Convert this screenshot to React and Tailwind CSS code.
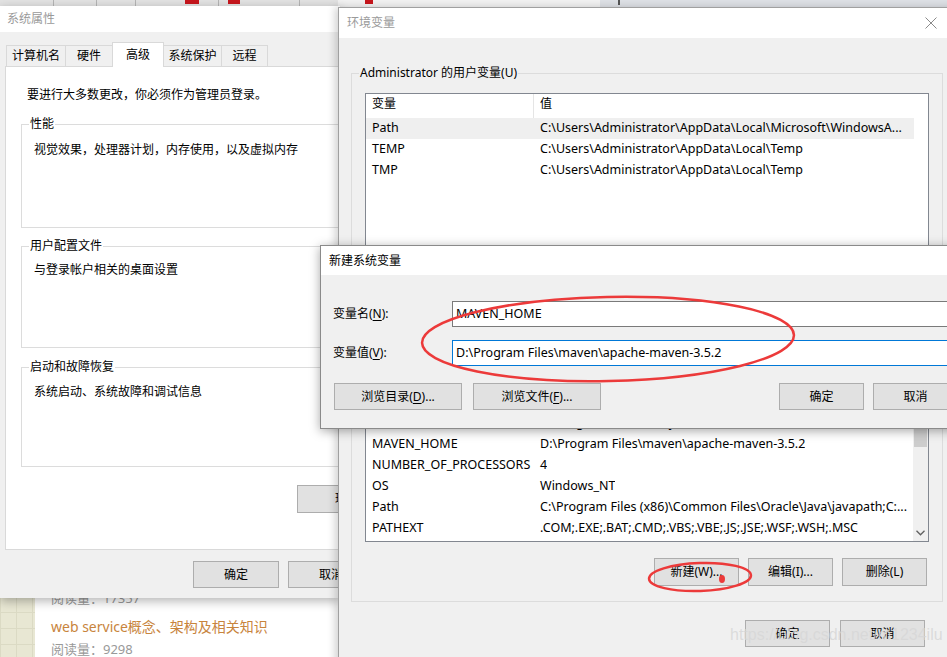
import React from "react";

const Btn = ({ className = "", children }) => (
  <div
    className={
      "flex shrink-0 items-center justify-center border border-[#adadad] bg-[#e1e1e1] text-[12px] leading-none text-black " +
      className
    }
  >
    {children}
  </div>
);

const U = ({ children }) => <span className="underline underline-offset-2">{children}</span>;

const Row = ({ name, value, sel }) => (
  <div className={"flex h-[21px] shrink-0 items-center text-[12.5px] " + (sel ? "bg-[#efefef]" : "")}>
    <div className="w-[168px] shrink-0 truncate pl-[6px]">{name}</div>
    <div className="truncate pl-[6px]">{value}</div>
  </div>
);

const Header = () => (
  <div className="flex h-[24px] shrink-0 text-[12px]">
    <div className="w-[168px] shrink-0 border-r border-[#e5e5e5] pl-[6px] pt-[2px] leading-[16px]">变量</div>
    <div className="pl-[6px] pt-[2px] leading-[16px]">值</div>
  </div>
);

export default function App() {
  const tab = "flex h-[21px] items-center justify-center border border-b-0 border-[#d9d9d9] bg-[#f0f0f0] text-[12px] -ml-px";
  return (
    <div className="relative h-[657px] w-[947px] overflow-hidden bg-[#e6e6e6] font-['Noto_Sans','Noto_Sans_CJK_SC',sans-serif] text-black">
      {/* browser tab strip */}
      <div className="absolute left-0 top-0 flex h-[8px] w-full bg-[#dee1e6]">
        <div className="flex h-full w-[338px] bg-[#e3e3e3]">
          <div className="h-full w-[54px] border-r border-[#b5b5b5]" />
          <div className="h-full w-[43px] border-r border-[#b5b5b5]" />
          <div className="h-full w-[39px] border-r border-[#b5b5b5]" />
          <div className="flex h-full w-[83px] items-start border-r border-[#b5b5b5] pl-[49px]">
            <div className="h-[4px] w-[14px] bg-[#c8161d]" />
          </div>
          <div className="flex h-full w-[81px] items-start border-r border-[#b5b5b5] pl-[9px]">
            <div className="h-[4px] w-[12px] bg-[#c8161d]" />
          </div>
        </div>
        <div className="relative flex h-full w-[262px] bg-[#f2f2f2] pl-[27px]">
          <div className="h-[4px] w-[8px] bg-[#c8161d]" />
        </div>
        <div className="ml-[18px] h-[5px] w-[2px] bg-[#555]" />
      </div>

      {/* blog page behind */}
      <div className="absolute left-0 top-[580px] flex h-[77px] w-[340px]">
        <div className="w-[35px] bg-[#e8e7d3] bg-[linear-gradient(#dbdac4_1px,transparent_1px),linear-gradient(90deg,#dbdac4_1px,transparent_1px)] bg-size-[16px_16px]" />
        <div className="flex flex-1 flex-col bg-white pl-[16px] pt-[10px]">
          <div className="text-[13px] leading-[16px] text-[#999]">阅读量：17357</div>
          <div className="mt-[12px] text-[14px] leading-[18px] text-[#c8843d]">web service概念、架构及相关知识</div>
          <div className="mt-[5px] text-[13px] leading-[16px] text-[#999]">阅读量：9298</div>
        </div>
      </div>

      {/* 系统属性 window */}
      <div className="absolute left-0 top-[6px] flex h-[592px] w-[340px] flex-col bg-[#f0f0f0] shadow-[0_3px_10px_rgba(0,0,0,0.3)]">
        <div className="flex h-[26px] shrink-0 items-center bg-white pl-[7px] text-[12px] text-[#9a9a9a]">系统属性</div>
        <div className="relative z-10 flex h-[34px] shrink-0 items-end pl-[6px]">
          <div className={tab + " ml-0 w-[60px]"}>计算机名</div>
          <div className={tab + " w-[48px]"}>硬件</div>
          <div className="-mb-px -ml-px flex h-[25px] w-[52px] items-start justify-center border border-b-0 border-[#d9d9d9] bg-white pt-[3px] text-[12px]">
            高级
          </div>
          <div className={tab + " w-[59px]"}>系统保护</div>
          <div className={tab + " w-[47px]"}>远程</div>
        </div>
        <div className="ml-[5px] flex h-[484px] w-[340px] shrink-0 flex-col border border-[#d9d9d9] bg-white text-[12px]">
          <div className="pl-[21px] pt-[20px] leading-[16px]">要进行大多数更改，你必须作为管理员登录。</div>
          <div className="ml-[15px] mt-[21px] flex h-[104px] w-[330px] shrink-0 flex-col border border-[#dcdcdc]">
            <div className="-mt-[9px] ml-[7px] w-fit bg-white px-px leading-[16px]">性能</div>
            <div className="ml-[12px] mt-[10px] leading-[16px]">视觉效果，处理器计划，内存使用，以及虚拟内存</div>
          </div>
          <div className="ml-[15px] mt-[18px] flex h-[102px] w-[330px] shrink-0 flex-col border border-[#dcdcdc]">
            <div className="-mt-[9px] ml-[7px] w-fit bg-white px-px leading-[16px]">用户配置文件</div>
            <div className="ml-[12px] mt-[8px] leading-[16px]">与登录帐户相关的桌面设置</div>
          </div>
          <div className="ml-[15px] mt-[19px] flex h-[100px] w-[330px] shrink-0 flex-col border border-[#dcdcdc]">
            <div className="-mt-[9px] ml-[7px] w-fit bg-white px-px leading-[16px]">启动和故障恢复</div>
            <div className="ml-[12px] mt-[9px] leading-[16px]">系统启动、系统故障和调试信息</div>
          </div>
          <Btn className="ml-[291px] mt-[18px] h-[28px] w-[150px]">
            环境变量(<U>N</U>)...
          </Btn>
        </div>
        <div className="ml-[193px] mt-[11px] flex gap-[9px]">
          <Btn className="h-[27px] w-[86px]">确定</Btn>
          <Btn className="h-[27px] w-[86px]">取消</Btn>
        </div>
      </div>

      {/* 环境变量 window */}
      <div className="absolute left-[338px] top-[7px] flex h-[660px] w-[620px] flex-col border-l border-t border-[#a0a0a0] bg-[#f0f0f0] shadow-[-3px_0_8px_rgba(0,0,0,0.18)]">
        <div className="flex h-[30px] shrink-0 items-center justify-between bg-white pl-[8px] pr-[21px] text-[12px] text-[#9a9a9a]">
          <span>环境变量</span>
          <svg width="12" height="12" viewBox="0 0 12 12">
            <path d="M0.5 0.5 L11.5 11.5 M11.5 0.5 L0.5 11.5" stroke="#8a8a8a" strokeWidth="1" />
          </svg>
        </div>

        <div className="ml-[12px] mt-[35px] flex h-[218px] w-[592px] shrink-0 flex-col border border-[#dcdcdc] text-[12px]">
          <div className="-mt-[9px] ml-[7px] w-fit bg-[#f0f0f0] px-px leading-[16px]">Administrator 的用户变量(U)</div>
          <div className="ml-[13px] mt-[12px] flex h-[180px] w-[564px] shrink-0 overflow-hidden border border-[#828790] bg-white">
            <div className="flex w-[548px] shrink-0 flex-col">
              <Header />
              <Row name="Path" value="C:\Users\Administrator\AppData\Local\Microsoft\WindowsA..." sel />
              <Row name="TEMP" value="C:\Users\Administrator\AppData\Local\Temp" />
              <Row name="TMP" value="C:\Users\Administrator\AppData\Local\Temp" />
            </div>
          </div>
        </div>

        <div className="ml-[12px] mt-[14px] flex h-[297px] w-[592px] shrink-0 flex-col border border-[#dcdcdc] text-[12px]">
          <div className="-mt-[9px] ml-[7px] w-fit bg-[#f0f0f0] px-px leading-[16px]">系统变量(S)</div>
          <div className="ml-[13px] mt-[12px] flex h-[217px] w-[564px] shrink-0 overflow-hidden border border-[#828790] bg-white">
            <div className="flex w-[547px] shrink-0 flex-col overflow-hidden">
              <Header />
              <Row name="CLASSPATH" value=".;%JAVA_HOME%\lib;%JAVA_HOME%\lib\tools.jar" />
              <Row name="ComSpec" value="C:\Windows\system32\cmd.exe" />
              <Row name="DriverData" value="C:\Windows\System32\Drivers\DriverData" />
              <Row name="JAVA_HOME" value="C:\Program Files\Java\jdk1.8.0_151" />
              <Row name="MAVEN_HOME" value="D:\Program Files\maven\apache-maven-3.5.2" />
              <Row name="NUMBER_OF_PROCESSORS" value="4" />
              <Row name="OS" value="Windows_NT" />
              <Row name="Path" value="C:\Program Files (x86)\Common Files\Oracle\Java\javapath;C:..." />
              <Row name="PATHEXT" value=".COM;.EXE;.BAT;.CMD;.VBS;.VBE;.JS;.JSE;.WSF;.WSH;.MSC" />
            </div>
            <div className="flex w-[15px] shrink-0 flex-col bg-[#f0f0f0]">
              <div className="ml-[1px] mt-[76px] h-[45px] w-[13px] bg-[#cdcdcd]" />
              <div className="mt-auto flex h-[16px] items-center justify-center">
                <svg width="9" height="6" viewBox="0 0 9 6">
                  <path d="M0.5 0.8 L4.5 4.8 L8.5 0.8" fill="none" stroke="#606060" strokeWidth="1.3" />
                </svg>
              </div>
            </div>
          </div>
          <div className="ml-[302px] mt-[16px] flex gap-[9px]">
            <Btn className="h-[28px] w-[85px]">新建(W)...</Btn>
            <Btn className="h-[28px] w-[85px]">编辑(I)...</Btn>
            <Btn className="h-[28px] w-[85px]">删除(L)</Btn>
          </div>
        </div>

        <div className="ml-[406px] mt-[18px] flex gap-[10px]">
          <Btn className="h-[27px] w-[85px]">确定</Btn>
          <Btn className="h-[27px] w-[85px]">取消</Btn>
        </div>
      </div>

      {/* 新建系统变量 dialog */}
      <div className="absolute left-[320px] top-[245px] flex h-[184px] w-[640px] flex-col border border-[#8a8a8a] bg-[#f0f0f0] text-[12px] shadow-[0_2px_10px_rgba(0,0,0,0.35)]">
        <div className="flex h-[29px] shrink-0 items-center bg-white pl-[8px]">新建系统变量</div>
        <div className="mt-[26px] flex items-center">
          <div className="w-[131px] shrink-0 pl-[12px]">
            变量名(<U>N</U>):
          </div>
          <div className="flex h-[26px] w-[520px] items-center border border-[#7a7a7a] bg-white pl-[3px] text-[12.5px]">MAVEN_HOME</div>
        </div>
        <div className="mt-[13px] flex items-center">
          <div className="w-[131px] shrink-0 pl-[12px]">
            变量值(<U>V</U>):
          </div>
          <div className="flex h-[26px] w-[520px] items-center border border-[#0078d7] bg-white pl-[3px] text-[12.5px]">
            D:\Program Files\maven\apache-maven-3.5.2
          </div>
        </div>
        <div className="ml-[13px] mt-[17px] flex">
          <Btn className="h-[27px] w-[128px]">
            浏览目录(<U>D</U>)...
          </Btn>
          <Btn className="ml-[11px] h-[27px] w-[128px]">
            浏览文件(<U>F</U>)...
          </Btn>
          <Btn className="ml-[178px] h-[27px] w-[85px]">确定</Btn>
          <Btn className="ml-[9px] h-[27px] w-[85px]">取消</Btn>
        </div>
      </div>

      {/* annotations */}
      <svg className="pointer-events-none absolute left-0 top-0" width="947" height="657" viewBox="0 0 947 657">
        <ellipse cx="608" cy="339" rx="186" ry="42" transform="rotate(-1.2 608 339)" fill="none" stroke="#ec3a3a" strokeWidth="2.5" />
        <ellipse cx="700" cy="577" rx="51" ry="14" transform="rotate(-2 700 577)" fill="none" stroke="#ec3a3a" strokeWidth="2.5" />
        <ellipse cx="722" cy="579" rx="3" ry="4" fill="#ec3a3a" />
      </svg>
      <div className="pointer-events-none absolute left-[730px] top-[625px] font-['Liberation_Sans',sans-serif] text-[16px] leading-[20px] text-[rgba(215,215,215,0.85)]">
        https://blog.csdn.net/m1234ilu
      </div>
    </div>
  );
}
